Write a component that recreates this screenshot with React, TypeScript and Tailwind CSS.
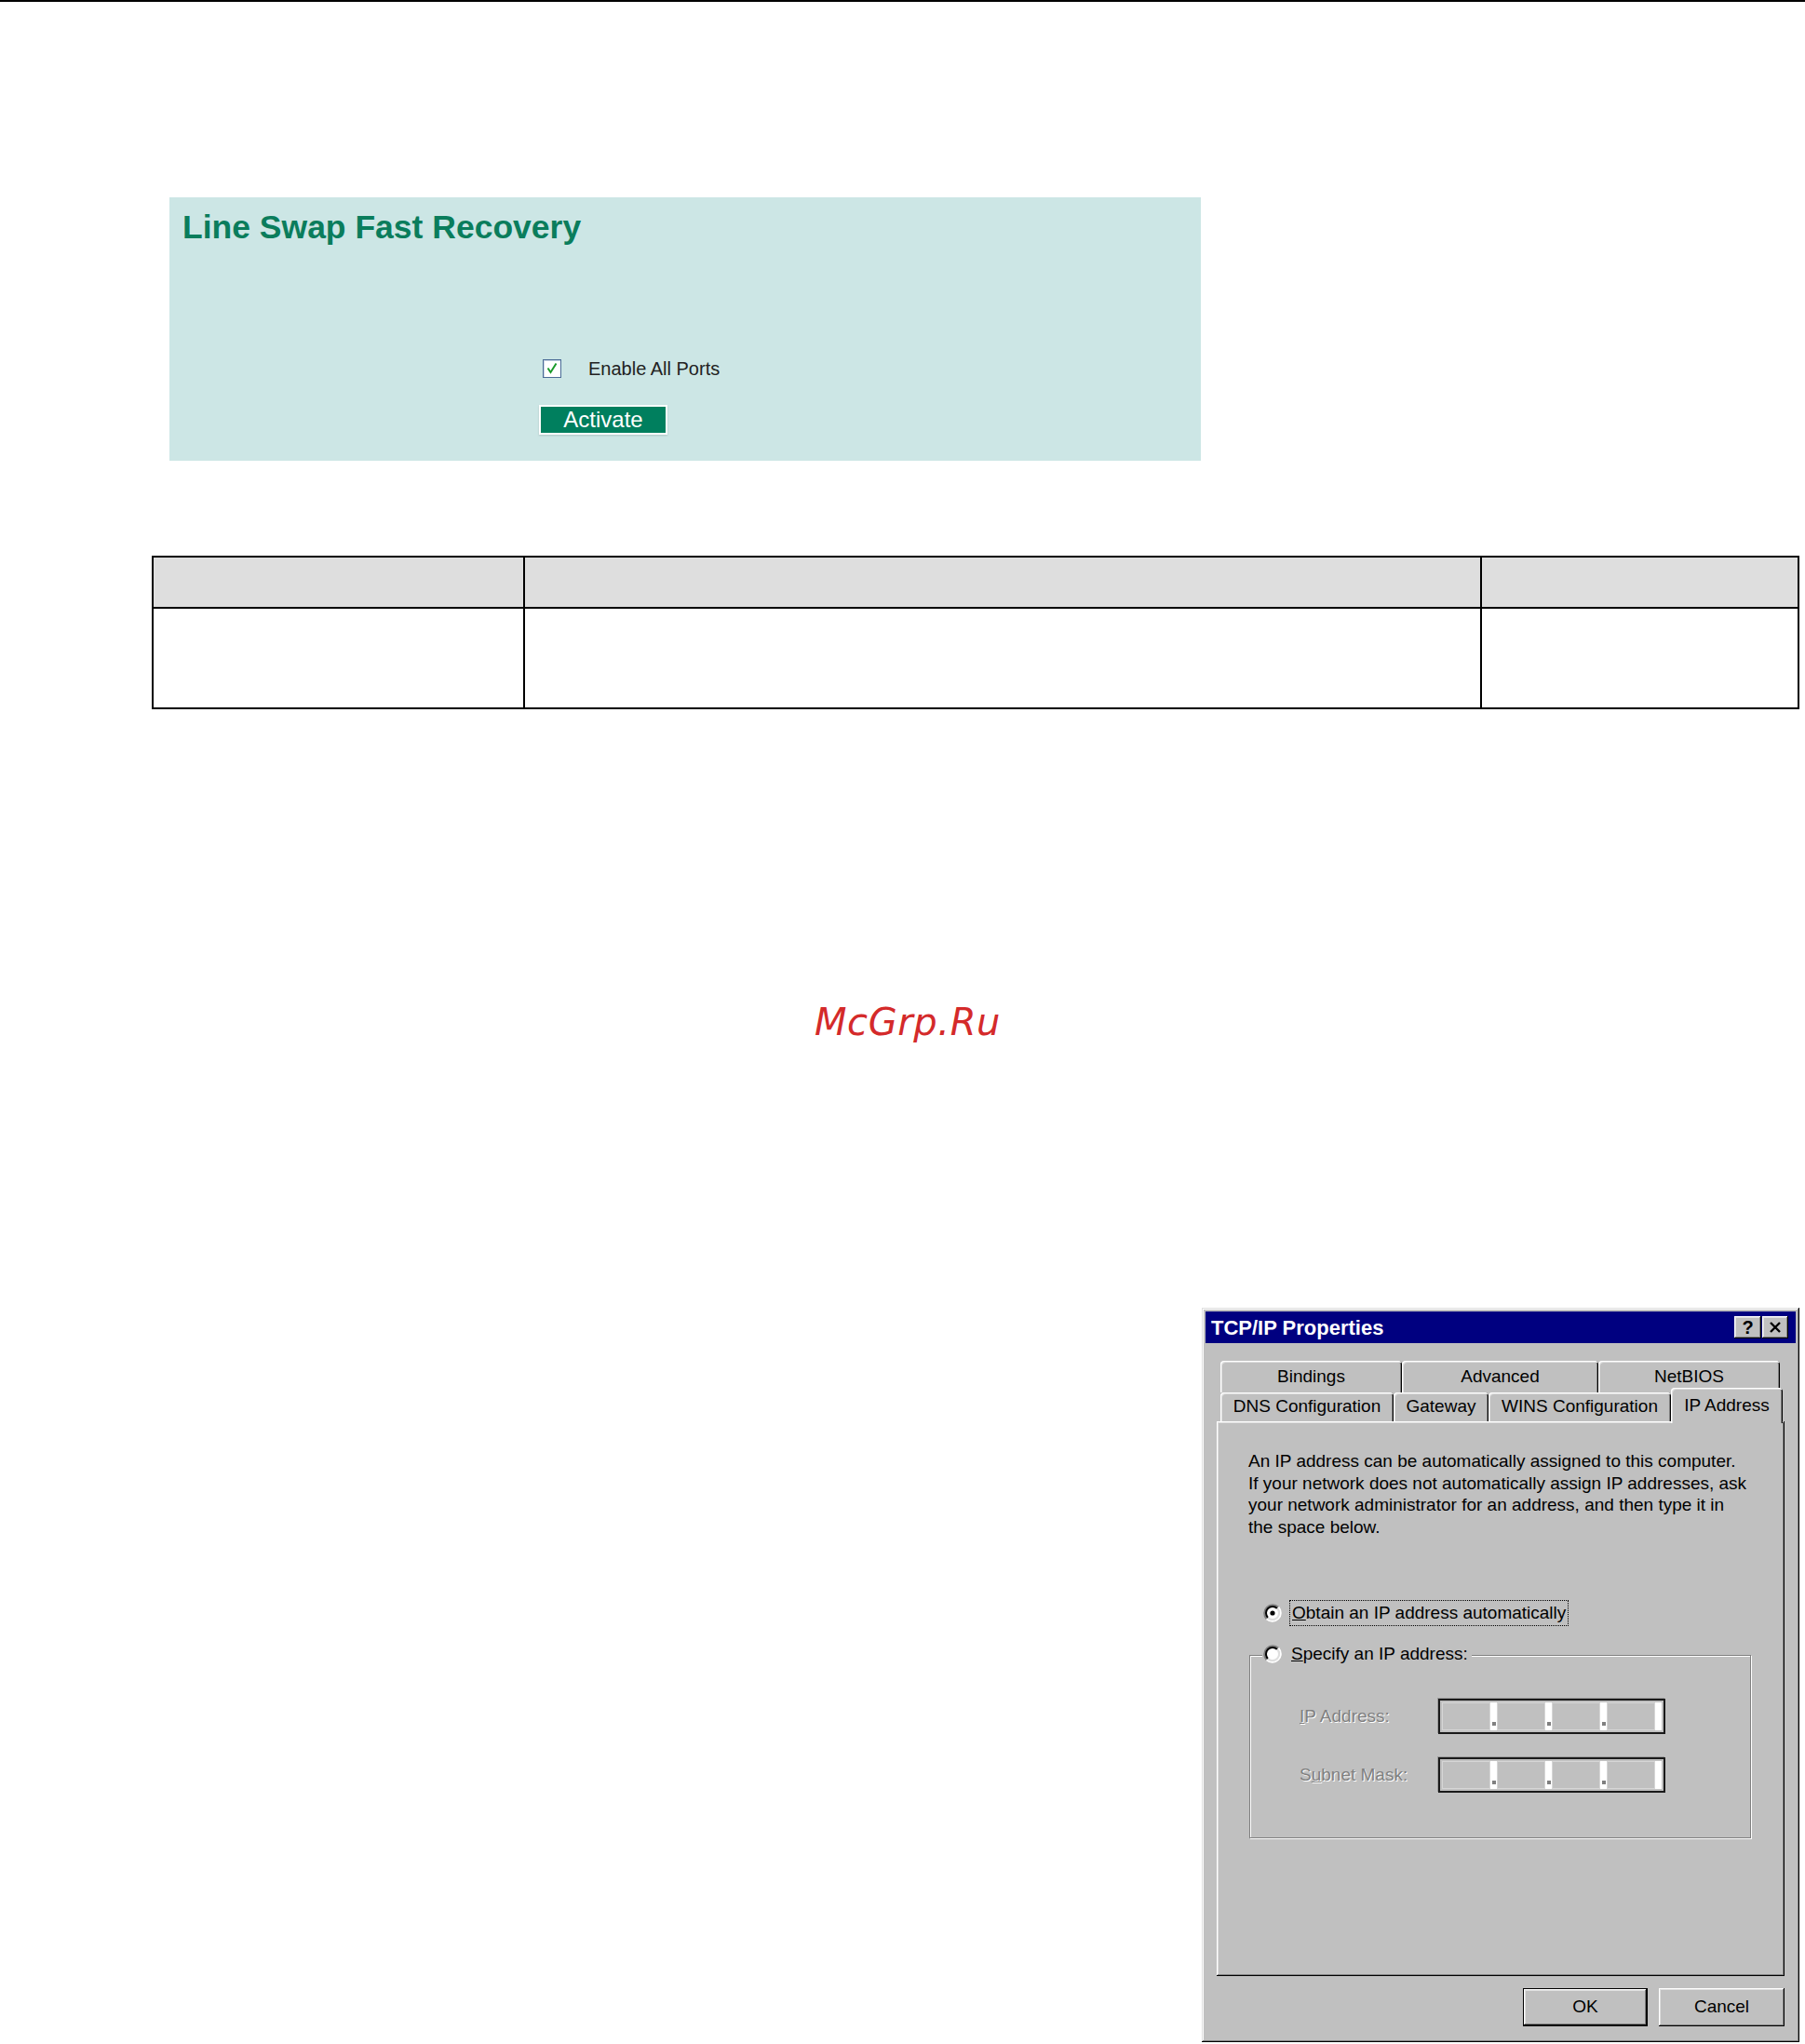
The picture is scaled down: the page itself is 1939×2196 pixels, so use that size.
import React from "react";

const raised =
  "shadow-[inset_-1px_-1px_0_#000,inset_1px_1px_0_#fff,inset_-2px_-2px_0_#808080,inset_2px_2px_0_#dfdfdf]";
const frame =
  "shadow-[inset_-1px_-1px_0_#000,inset_1px_1px_0_#dfdfdf,inset_-2px_-2px_0_#808080,inset_2px_2px_0_#fff]";
const tab =
  "rounded-t-[4px] shadow-[inset_1px_1px_0_#fff,inset_2px_2px_0_#dfdfdf,inset_-1px_0_0_#000,inset_-2px_0_0_#808080]";
const disabled = "text-[#808080] [text-shadow:1px_1px_0_#fff]";

const Radio = ({ checked }: { checked?: boolean }) => (
  <svg width="20" height="20" viewBox="0 0 20 20" className="shrink-0">
    <circle cx="10" cy="10" r="7" fill="#fff" />
    <path d="M3.64 16.36 A9 9 0 0 1 16.36 3.64" stroke="#808080" strokeWidth="2" fill="none" />
    <path d="M16.36 3.64 A9 9 0 0 1 3.64 16.36" stroke="#fff" strokeWidth="2" fill="none" />
    <path d="M5.05 14.95 A7 7 0 0 1 14.95 5.05" stroke="#000" strokeWidth="2" fill="none" />
    <path d="M14.95 5.05 A7 7 0 0 1 5.05 14.95" stroke="#dfdfdf" strokeWidth="2" fill="none" />
    {checked && <circle cx="10" cy="10" r="2.6" fill="#000" />}
  </svg>
);

const IpField = () => (
  <div className="flex h-[38px] w-[244px] border-2 border-[#1a1a1a] bg-[#c0c0c0] p-[2px] shadow-[-1px_-1px_0_#9a9a9a]">
    {[0, 1, 2, 3].map((i) => (
      <div key={i} className="flex h-full">
        <div className="h-full w-[52px] border border-[#d6d6d6] bg-[#c0c0c0]" />
        <div className="relative h-full w-[7px] bg-white">
          {i < 3 && <div className="absolute left-[2px] top-[21px] h-[4px] w-[4px] bg-[#808080]" />}
        </div>
      </div>
    ))}
  </div>
);

export default function App() {
  return (
    <div className="relative h-[2196px] w-[1939px] overflow-hidden border-t-2 border-black bg-white font-['Liberation_Sans',Arial,sans-serif]">
      {/* settings panel */}
      <div className="ml-[182px] mt-[210px] h-[283px] w-[1108px] bg-[#cce6e5] pl-[14px] pt-[15px]">
        <h1 className="text-[35.5px] font-bold leading-none text-[#0a7d5c]">Line Swap Fast Recovery</h1>
        <div className="ml-[387px] mt-[123px] flex items-center">
          <div className="flex h-[20px] w-[20px] items-center justify-center border border-[#4a6a96] bg-white shadow-[inset_1px_1px_0_#c8d4e4]">
            <svg width="12" height="13" viewBox="0 0 12 13">
              <path d="M1.5 6.5 L4.5 11 L10.5 1.5" stroke="#1a9a2a" strokeWidth="2" fill="none" />
            </svg>
          </div>
          <span className="ml-[29px] text-[20px] leading-none text-[#222]">Enable All Ports</span>
        </div>
        <button className="ml-[383px] mt-[29px] flex h-[32px] w-[138px] items-center justify-center border-2 border-white bg-[#007f5e] text-[24px] leading-none text-white shadow-[0_1px_2px_rgba(0,0,0,0.15)]">
          Activate
        </button>
      </div>

      {/* table */}
      <div className="ml-[163px] mt-[102px] w-[1770px] border-2 border-black">
        <div className="flex h-[55px] border-b-2 border-black bg-[#dedede]">
          <div className="w-[399px] border-r-2 border-black" />
          <div className="w-[1028px] border-r-2 border-black" />
          <div className="flex-1" />
        </div>
        <div className="flex h-[106px]">
          <div className="w-[399px] border-r-2 border-black" />
          <div className="w-[1028px] border-r-2 border-black" />
          <div className="flex-1" />
        </div>
      </div>

      {/* watermark */}
      <div className="ml-[875px] mt-[316px] h-[40px] font-['DejaVu_Sans',sans-serif] text-[40px] italic leading-none tracking-[0.6px] text-[#d42a2a]">
        McGrp.Ru
      </div>

      {/* TCP/IP dialog */}
      <div className={`ml-[1291px] mt-[287px] h-[789px] w-[642px] bg-[#c0c0c0] p-[4px] text-[19px] text-black ${frame}`}>
        <div className="flex h-[34px] items-center bg-[#000080] pl-[6px] pr-[8px]">
          <span className="flex-1 text-[22px] font-bold text-white">TCP/IP Properties</span>
          <div className="flex gap-[1px]">
            <div className={`flex h-[24px] w-[29px] items-center justify-center bg-[#c0c0c0] text-[20px] font-bold leading-none ${raised}`}>
              ?
            </div>
            <div className={`flex h-[24px] w-[28px] items-center justify-center bg-[#c0c0c0] ${raised}`}>
              <svg width="14" height="12" viewBox="0 0 14 12">
                <path d="M2 1 L12 11 M12 1 L2 11" stroke="#000" strokeWidth="2.4" />
              </svg>
            </div>
          </div>
        </div>

        <div className="ml-[16px] mt-[19px] flex h-[34px]">
          <div className={`flex w-[195px] items-center justify-center ${tab}`}>Bindings</div>
          <div className={`flex w-[211px] items-center justify-center ${tab}`}>Advanced</div>
          <div className={`flex w-[195px] items-center justify-center ${tab}`}>NetBIOS</div>
        </div>
        <div className="ml-[16px] flex h-[31px] items-end">
          <div className={`flex h-[31px] w-[186px] items-center justify-center ${tab}`}>DNS Configuration</div>
          <div className={`flex h-[31px] w-[102px] items-center justify-center ${tab}`}>Gateway</div>
          <div className={`flex h-[31px] w-[196px] items-center justify-center ${tab}`}>WINS Configuration</div>
          <div className={`relative z-10 -mb-[2px] flex h-[38px] w-[120px] items-center justify-center bg-[#c0c0c0] ${tab}`}>
            IP Address
          </div>
        </div>

        <div className={`ml-[12px] h-[596px] w-[610px] pl-[34px] pt-[31px] ${raised}`}>
          <p className="whitespace-nowrap leading-[23.7px]">
            An IP address can be automatically assigned to this computer.
            <br />
            If your network does not automatically assign IP addresses, ask
            <br />
            your network administrator for an address, and then type it in
            <br />
            the space below.
          </p>

          <div className="ml-[16px] mt-[65px] flex h-[30px] items-center">
            <Radio checked />
            <span className="ml-[8px] border border-dotted border-black px-[2px] leading-[26px]">
              <span className="underline">O</span>btain an IP address automatically
            </span>
          </div>

          <div className="relative ml-[1px] mt-[30px] h-[197px] w-[539px] border border-[#808080] pl-[53px] pt-[46px] shadow-[1px_1px_0_#fff,inset_1px_1px_0_#fff]">
            <div className="absolute left-[13px] top-[-17px] flex h-[30px] items-center bg-[#c0c0c0] pl-[1px] pr-[4px]">
              <Radio />
              <span className="ml-[10px]">
                <span className="underline">S</span>pecify an IP address:
              </span>
            </div>
            <div className="flex h-[38px] items-center">
              <span className={`w-[149px] ${disabled}`}>
                <span className="underline">I</span>P Address:
              </span>
              <IpField />
            </div>
            <div className="mt-[25px] flex h-[38px] items-center">
              <span className={`w-[149px] ${disabled}`}>
                S<span className="underline">u</span>bnet Mask:
              </span>
              <IpField />
            </div>
          </div>
        </div>

        <div className="mr-[12px] mt-[13px] flex justify-end gap-[12px]">
          <button className={`flex h-[41px] w-[134px] items-center justify-center border border-black bg-[#c0c0c0] ${raised}`}>
            OK
          </button>
          <button className={`flex h-[41px] w-[135px] items-center justify-center bg-[#c0c0c0] ${raised}`}>
            Cancel
          </button>
        </div>
      </div>
    </div>
  );
}
